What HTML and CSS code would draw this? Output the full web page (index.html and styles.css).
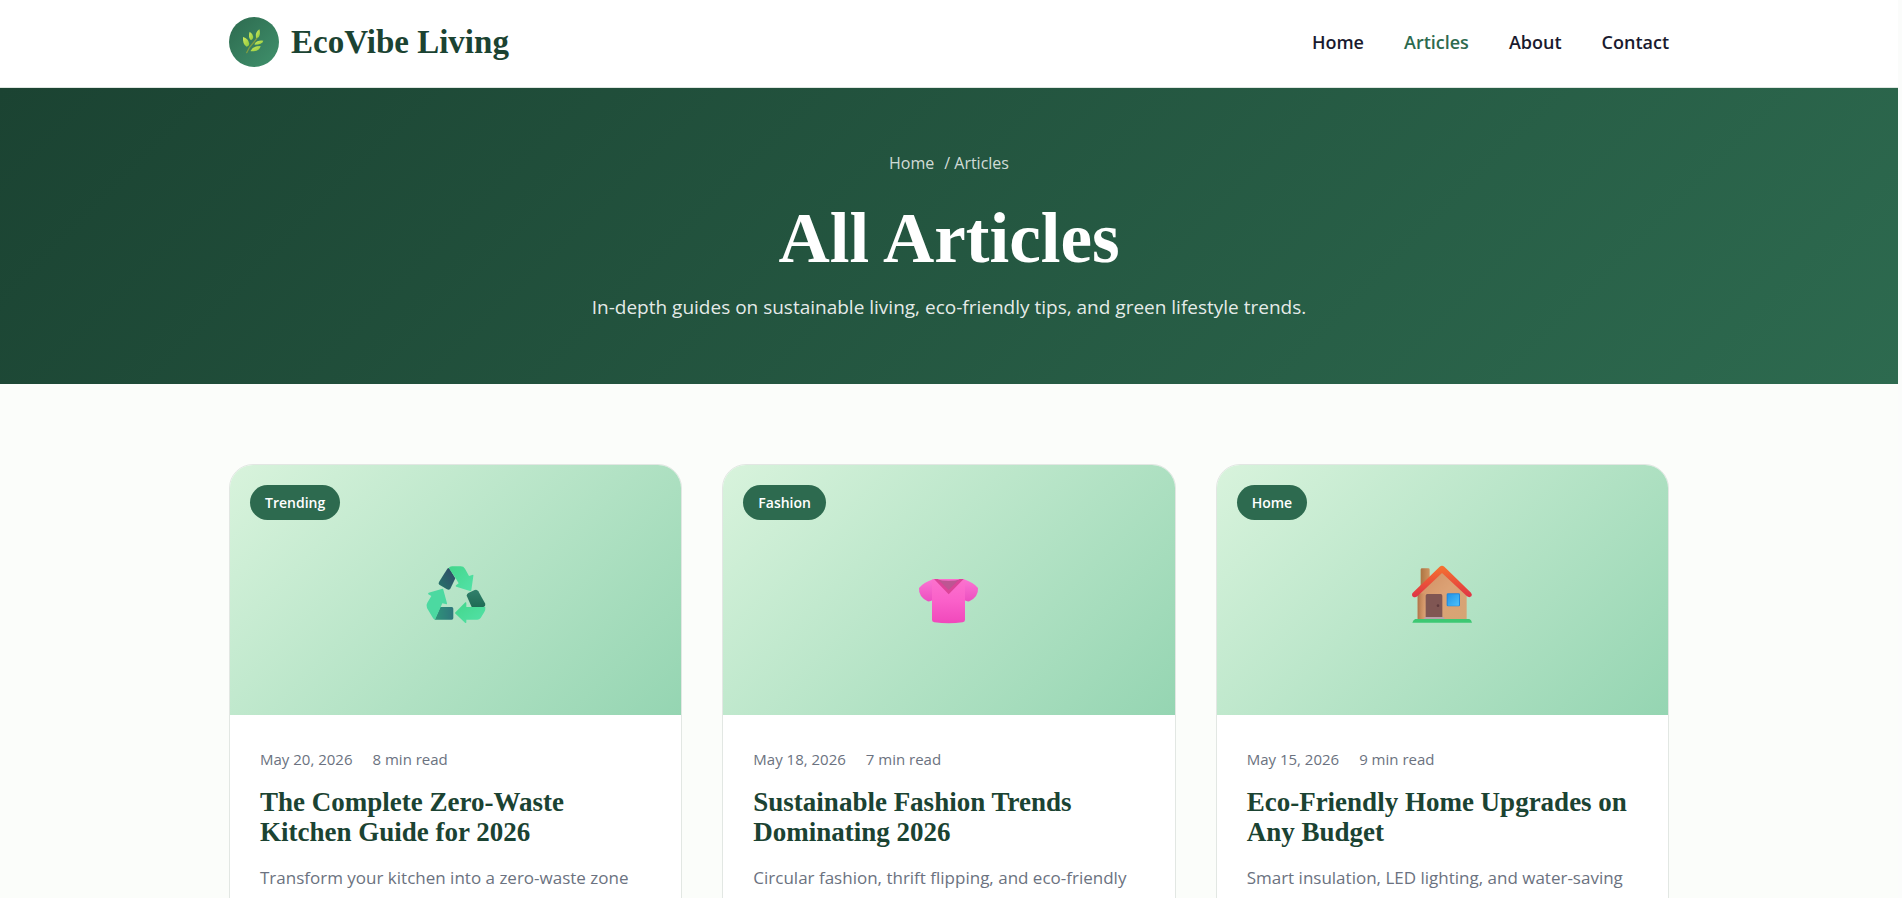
FILE: index.html
```html
<!DOCTYPE html>
<html lang="en">
<head>
<meta charset="utf-8">
<meta name="viewport" content="width=device-width, initial-scale=1">
<title>All Articles</title>
<link rel="stylesheet" href="styles.css">
</head>
<body>
<header class="site-header">
  <div class="container header-inner">
    <a class="logo" href="#">
      <span class="logo-mark">
        <svg viewBox="57 84 84 84" width="28" height="28" aria-hidden="true">
          <defs>
            <linearGradient id="leaf" x1="0" y1="0" x2="1" y2="1"><stop offset="0" stop-color="#d3ea5c"/><stop offset="1" stop-color="#8cc83c"/></linearGradient>
          </defs>
          <path d="M77 158Q84 141 97 128Q108 117 113 103" fill="none" stroke="#7f9c42" stroke-width="4" stroke-linecap="round"/>
          <g fill="url(#leaf)">
            <path d="M66 111Q83 115 85 132Q84 139 77 140Q64 133 66 111Z"/>
            <path d="M86 95Q96 101 97 111Q96 119 90 121Q80 111 86 95Z"/>
            <path d="M115 88Q120 101 113 112L105 114Q101 98 115 88Z"/>
            <path d="M101 131Q108 120 127 122Q124 134 101 134Z"/>
            <path d="M89 152Q96 138 119 138Q116 155 89 154Z"/>
          </g>
        </svg>
      </span>
      <span class="logo-text">EcoVibe Living</span>
    </a>
    <nav class="main-nav" aria-label="Main">
      <a href="#">Home</a>
      <a class="active" href="#" aria-current="page">Articles</a>
      <a href="#">About</a>
      <a href="#">Contact</a>
    </nav>
  </div>
</header>

<section class="hero">
  <div class="breadcrumb"><a href="#">Home</a><span>/ Articles</span></div>
  <h1>All Articles</h1>
  <p>In-depth guides on sustainable living, eco-friendly tips, and green lifestyle trends.</p>
</section>

<main class="container articles">
  <article class="card">
    <div class="card-image">
      <span class="badge">Trending</span>
      <svg viewBox="26 12 216 216" width="72" height="72" aria-hidden="true">
        <defs>
          <linearGradient id="r1" x1="0" y1="1" x2="1" y2="0"><stop offset="0" stop-color="#26766b"/><stop offset="1" stop-color="#314667"/></linearGradient>
          <linearGradient id="r2" x1="0" y1="0" x2="0" y2="1"><stop offset="0" stop-color="#31806c"/><stop offset="1" stop-color="#1f6b54"/></linearGradient>
          <linearGradient id="r3"><stop offset="0" stop-color="#2f9479"/><stop offset="1" stop-color="#2f767b"/></linearGradient>
          <linearGradient id="r4" x1="0" y1="0" x2="1" y2="1"><stop offset="0" stop-color="#43d68b"/><stop offset="1" stop-color="#53e2a8"/></linearGradient>
        </defs>
        <path d="M108 56Q112 52 115 56L132 85L117 116Q113 121 107 118L84 104Q80 101 83 96Z" fill="url(#r1)"/>
        <path d="M112 54Q115 49 122 49H148Q157 49 161 56L173 78L185 74Q187 74 186 78L180 121Q180 124 176 123L135 110Q130 108 135 105L142 100L132 83Z" fill="url(#r4)"/>
        <path d="M166 137Q166 132 171 129L190 120Q197 117 201 124L221 160Q224 169 216 171H181Z" fill="url(#r2)"/>
        <path d="M131 188L162 157Q165 155 165 160V171H222Q223 179 219 186L208 204Q204 209 198 209H165V217Q165 221 161 218L131 190Z" fill="url(#r4)"/>
        <path d="M87 171H121Q126 171 126 176V204Q126 209 121 209H70Z" fill="url(#r3)"/>
        <path d="M52 128L91 117Q95 115 96 119L107 160Q108 164 103 162L93 160L71 209Q66 207 63 201L47 174Q43 166 48 158L60 138L51 133Q49 130 52 128Z" fill="#4cd9a1"/>
      </svg>
    </div>
    <div class="card-body">
      <div class="meta"><span>May 20, 2026</span><span>8 min read</span></div>
      <h2>The Complete Zero-Waste Kitchen Guide for 2026</h2>
      <p>Transform your kitchen into a zero-waste zone</p>
    </div>
  </article>

  <article class="card">
    <div class="card-image">
      <span class="badge">Fashion</span>
      <svg viewBox="36 -18 216 216" width="72" height="72" aria-hidden="true">
        <defs>
          <linearGradient id="s1" x1="0" y1="0" x2="0" y2="1"><stop offset="0" stop-color="#fb72cd"/><stop offset=".5" stop-color="#fa60c9"/><stop offset="1" stop-color="#f048bb"/></linearGradient>
          <linearGradient id="s2" x1="0" y1="0" x2="0" y2="1"><stop offset="0" stop-color="#fb76d3"/><stop offset="1" stop-color="#ec4fc0"/></linearGradient>
        </defs>
        <path d="M98 57Q66 68 54 84Q52 110 80 124Q88 125 94 121Z" fill="url(#s2)"/>
        <path d="M187 57Q219 68 231 84Q233 110 205 124Q197 125 191 121Z" fill="url(#s2)"/>
        <path d="M97 57H187Q192 59 192 64V179Q192 186 185 187Q143 193 100 187Q93 186 93 179V62Q93 58 97 57Z" fill="url(#s1)"/>
        <path d="M106 58Q143 67 181 58L143 96Z" fill="#bd5693"/>
        <path d="M99 57H110L143 90L176 57H188L143 103Z" fill="#dc4498"/>
      </svg>
    </div>
    <div class="card-body">
      <div class="meta"><span>May 18, 2026</span><span>7 min read</span></div>
      <h2>Sustainable Fashion Trends Dominating 2026</h2>
      <p>Circular fashion, thrift flipping, and eco-friendly</p>
    </div>
  </article>

  <article class="card">
    <div class="card-image">
      <span class="badge">Home</span>
      <svg viewBox="31 12 216 216" width="72" height="72" aria-hidden="true">
        <defs>
          <linearGradient id="h1" x1="0" y1="0" x2="1" y2="1"><stop offset="0" stop-color="#cf8d60"/><stop offset=".5" stop-color="#dca275"/><stop offset="1" stop-color="#d5a574"/></linearGradient>
          <linearGradient id="h2"><stop offset="0" stop-color="#ad7443"/><stop offset="1" stop-color="#cf9560"/></linearGradient>
          <linearGradient id="h3" x1="0" y1="0" x2="0" y2="1"><stop offset="0" stop-color="#f57430"/><stop offset=".6" stop-color="#e94d3b"/><stop offset="1" stop-color="#df3346"/></linearGradient>
          <linearGradient id="h4" x1="0" y1="0" x2="1" y2="1"><stop offset="0" stop-color="#2394e6"/><stop offset="1" stop-color="#4bc0fb"/></linearGradient>
          <linearGradient id="h5"><stop offset="0" stop-color="#a96f43" stop-opacity=".9"/><stop offset="1" stop-color="#c88758" stop-opacity="0"/></linearGradient>
        </defs>
        <path d="M75 59Q75 55 79 55H98Q102 55 102 59V110H75Z" fill="url(#h2)"/>
        <path d="M66 127L139 58L213 127V208H66Z" fill="url(#h1)"/>
        <path d="M66 130H90V208H66Z" fill="url(#h5)"/>
        <path d="M49 134Q49 130 53 127L132 50Q139 44 146 50L226 128Q231 134 227 139Q221 144 214 139L139 69L65 139Q58 144 52 140Q49 138 49 134Z" fill="url(#h3)"/>
        <path d="M90 137Q90 132 95 132H135Q140 132 140 137V203H90Z" fill="#805653"/>
        <circle cx="127" cy="167" r="4" fill="#603b3d"/>
        <path d="M88 201H144L147 208H85Z" fill="#b9a0a9"/>
        <rect x="153" y="130" width="40" height="39" rx="4" fill="#2187db"/>
        <rect x="156" y="133" width="34" height="34" rx="2" fill="url(#h4)"/>
        <path d="M59 207H221Q227 209 229 218H50Q53 209 59 207Z" fill="#3dc873"/>
      </svg>
    </div>
    <div class="card-body">
      <div class="meta"><span>May 15, 2026</span><span>9 min read</span></div>
      <h2>Eco-Friendly Home Upgrades on Any Budget</h2>
      <p>Smart insulation, LED lighting, and water-saving</p>
    </div>
  </article>
</main>
</body>
</html>
```

FILE: styles.css
```css
* {
  box-sizing: border-box;
  margin: 0;
  padding: 0;
}

html {
  background: #fbfcfb;
}

body {
  margin-right: 4px;
  background: #fbfdfa;
  color: #1a1a2e;
  font-family: "Open Sans", "Noto Sans", sans-serif;
  font-size: 16px;
}

a {
  color: inherit;
  text-decoration: none;
}

.container {
  width: 100%;
  max-width: 1480px;
  margin: 0 auto;
  padding-left: 20px;
  padding-right: 20px;
}

.site-header {
  background: #fff;
  border-bottom: 1px solid #dfe6e1;
}

.header-inner {
  display: flex;
  align-items: center;
  justify-content: space-between;
  padding-top: 17px;
  padding-bottom: 20px;
}

.logo {
  display: flex;
  align-items: center;
  gap: 12px;
}

.logo-mark {
  display: flex;
  align-items: center;
  justify-content: center;
  width: 50px;
  height: 50px;
  border-radius: 50%;
  background: linear-gradient(135deg, #2d6a4f, #40916c);
}

.logo-text {
  font: bold 33px/48px "Liberation Serif", serif;
  color: #1b4332;
}

.main-nav {
  display: flex;
  gap: 40px;
  font-size: 18px;
  font-weight: 600;
}

.main-nav .active {
  color: #2d6a4f;
}

.hero {
  display: flex;
  flex-direction: column;
  align-items: center;
  padding: 60px 20px;
  background: linear-gradient(135deg, #1b4332, #2d6a4f);
  color: #fff;
  text-align: center;
}

.breadcrumb {
  display: flex;
  gap: 10px;
  line-height: 30px;
  color: rgba(255, 255, 255, 0.8);
}

.hero h1 {
  margin-top: 18px;
  font: bold 71px/84px "Liberation Serif", serif;
}

.hero p {
  margin-top: 10px;
  font-size: 19px;
  line-height: 34px;
  color: rgba(255, 255, 255, 0.9);
}

.articles {
  display: grid;
  grid-template-columns: repeat(3, 1fr);
  gap: 40px;
  padding-top: 80px;
}

.card {
  overflow: hidden;
  border: 1px solid #e2e7e3;
  border-radius: 24px;
  background: #fff;
}

.card-image {
  position: relative;
  display: flex;
  align-items: center;
  justify-content: center;
  height: 250px;
  background: linear-gradient(135deg, #d8f3dc, #95d5b2);
}

.badge {
  position: absolute;
  top: 20px;
  left: 20px;
  padding: 0 15px;
  border-radius: 20px;
  background: #2d6a4f;
  color: #fff;
  font-size: 14px;
  font-weight: 600;
  line-height: 35px;
}

.card-body {
  padding: 30px 30px 80px;
}

.meta {
  display: flex;
  gap: 20px;
  font-size: 15px;
  line-height: 28px;
  color: #6b7280;
}

.card h2 {
  margin-top: 14px;
  font: bold 27px/30px "Liberation Serif", serif;
  color: #1b4332;
}

.card p {
  margin-top: 16px;
  font-size: 17px;
  line-height: 30px;
  color: #6b7280;
}
```
